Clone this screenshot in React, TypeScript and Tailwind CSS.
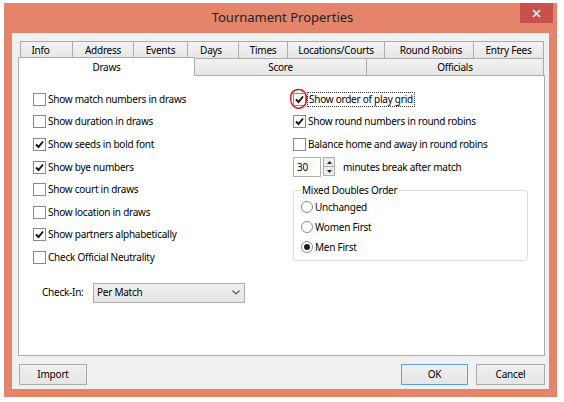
import React from 'react';

const font = { fontFamily: '"Noto Sans", "Open Sans", sans-serif' };

const rowOne = [
    { label: 'Info', w: 'w-[53px] pr-[12px]' },
    { label: 'Address', w: 'w-[62px]' },
    { label: 'Events', w: 'w-[55px]' },
    { label: 'Days', w: 'w-[52px] pr-[4px]' },
    { label: 'Times', w: 'w-[50px]' },
    { label: 'Locations/Courts', w: 'w-[98px]' },
    { label: 'Round Robins', w: 'w-[90px] pl-[4px]' },
    { label: 'Entry Fees', w: 'w-[71px]' },
];

const Check = ({ checked }: { checked?: boolean }) => (
    <span className="w-[13px] h-[13px] shrink-0 border border-[#8a8a8a] bg-white flex items-center justify-center">
        {checked && (
            <svg width="9" height="9" viewBox="0 0 9 9">
                <path d="M1 4.5 L3.5 7 L8 1.5" fill="none" stroke="#111" strokeWidth="1.9" />
            </svg>
        )}
    </span>
);

const Radio = ({ checked }: { checked?: boolean }) => (
    <span className="w-[12px] h-[12px] shrink-0 rounded-full border border-[#8a8a8a] bg-white flex items-center justify-center">
        {checked && <span className="w-[6px] h-[6px] rounded-full bg-[#1a1a1a]" />}
    </span>
);

const CheckRow = ({ label, checked }: { label: string; checked?: boolean }) => (
    <div className="h-[22.6px] flex items-center gap-[2px]">
        <Check checked={checked} />
        <span>{label}</span>
    </div>
);

const Button = ({ children, def, w }: { children: React.ReactNode; def?: boolean; w: string }) => (
    <button
        className={`${w} h-[21px] border ${def ? 'border-[#5aa2e6]' : 'border-[#acacac]'} bg-gradient-to-b from-[#f0f0f0] to-[#e5e5e5] text-[10px] tracking-[-0.2px] text-black`}
    >
        {children}
    </button>
);

export default function App() {
    return (
        <div className="w-[564px] h-[402px] bg-white pt-[3px] pl-[4px] text-[10px] tracking-[-0.25px] text-black" style={font}>
            <div className="w-[553px] h-[394px] bg-[#e4856b] flex flex-col px-[8px] pb-[8px]">
                {/* Title bar */}
                <div className="h-[30px] relative flex items-center justify-center">
                    <span className="text-[13px] tracking-normal text-[#222] -mt-[1px] ml-[4px]">Tournament Properties</span>
                    <div className="absolute -right-[4px] top-0 w-[33px] h-[20px] bg-[#c9514b] flex items-center justify-center">
                        <svg width="9" height="9" viewBox="0 0 9 9">
                            <path d="M1 1 L8 8 M8 1 L1 8" stroke="#fff" strokeWidth="1.6" />
                        </svg>
                    </div>
                </div>

                {/* Client area */}
                <div className="flex-1 bg-[#f0f0f0] flex flex-col pt-[8px] pl-[6px] pr-[4px]">
                    {/* Tabs */}
                    <div className="ml-[2px] mr-[1px]">
                        <div className="flex h-[17px]">
                            {rowOne.map((t, i) => (
                                <div
                                    key={t.label}
                                    className={`${t.w} ${i > 0 ? '-ml-px' : ''} border border-b-0 border-[#acacac] bg-gradient-to-b from-[#f2f2f2] to-[#e6e6e6] flex items-center justify-center leading-none`}
                                >
                                    {t.label}
                                </div>
                            ))}
                        </div>
                        <div className="flex h-[17px] items-end">
                            <div className="relative z-10 w-[177px] h-[19px] -ml-[2px] -mb-px bg-white border border-b-0 border-[#acacac] flex items-start justify-center pt-[2px] leading-[14px]">
                                Draws
                            </div>
                            <div className="w-[173px] h-[17px] -ml-px border border-b-0 border-[#acacac] bg-gradient-to-b from-[#f2f2f2] to-[#e6e6e6] flex items-center justify-center leading-none">
                                Score
                            </div>
                            <div className="w-[178px] h-[17px] -ml-px border border-b-0 border-[#acacac] bg-gradient-to-b from-[#f2f2f2] to-[#e6e6e6] flex items-center justify-center leading-none">
                                Officials
                            </div>
                        </div>
                    </div>

                    {/* Panel */}
                    <div className="h-[281px] bg-white border border-[#acacac] pt-[12px] pl-[14px] flex">
                        <div className="w-[260px] flex flex-col">
                            <CheckRow label="Show match numbers in draws" />
                            <CheckRow label="Show duration in draws" />
                            <CheckRow label="Show seeds in bold font" checked />
                            <CheckRow label="Show bye numbers" checked />
                            <CheckRow label="Show court in draws" />
                            <CheckRow label="Show location in draws" />
                            <CheckRow label="Show partners alphabetically" checked />
                            <CheckRow label="Check Official Neutrality" />
                            <div className="mt-[14px] ml-[9px] flex items-center gap-[6px]">
                                <span className="w-[45px]">Check-In:</span>
                                <div className="w-[152px] h-[20px] border border-[#acacac] bg-gradient-to-b from-[#f0f0f0] to-[#e5e5e5] flex items-center justify-between pl-[3px] pr-[4px]">
                                    <span>Per Match</span>
                                    <svg width="8" height="5" viewBox="0 0 8 5">
                                        <path d="M0.5 0.5 L4 4 L7.5 0.5" fill="none" stroke="#555" strokeWidth="1.2" />
                                    </svg>
                                </div>
                            </div>
                        </div>

                        <div className="flex flex-col">
                            <div className="h-[22.6px] flex items-center gap-[1px] relative">
                                <Check checked />
                                <span className="border border-dotted border-[#333] px-px leading-[13px]">Show order of play grid</span>
                                <svg className="absolute -left-[4px] top-0" width="20" height="22" viewBox="0 0 20 22">
                                    <path d="M14 2.5 C9 0.5 3.5 1.5 2 7 C1 12 2 18 8 20 C13 21 17 18 17.5 12 C18 7 17 4 12.5 2.2" fill="none" stroke="#e01818" strokeWidth="1.5" />
                                </svg>
                            </div>
                            <CheckRow label="Show round numbers in round robins" checked />
                            <CheckRow label="Balance home and away in round robins" />
                            <div className="h-[22.6px] flex items-center">
                                <div className="w-[28px] h-[20px] border border-[#abadb3] bg-white flex items-center pl-[3px]">30</div>
                                <div className="ml-[2px] w-[12px] h-[20px] flex flex-col">
                                    <div className="h-[10px] border border-[#acacac] bg-[#ececec] flex items-center justify-center">
                                        <svg width="5" height="3" viewBox="0 0 5 3"><path d="M0 3 L2.5 0 L5 3 Z" fill="#222" /></svg>
                                    </div>
                                    <div className="h-[10px] -mt-px border border-[#acacac] bg-[#ececec] flex items-center justify-center">
                                        <svg width="5" height="3" viewBox="0 0 5 3"><path d="M0 0 L2.5 3 L5 0 Z" fill="#222" /></svg>
                                    </div>
                                </div>
                                <span className="ml-[8px]">minutes break after match</span>
                            </div>
                            <fieldset className="mt-[5px] w-[235px] border border-[#dcdcdc] rounded-[3px] pl-[7px] pb-[3px]">
                                <legend className="px-px leading-[14px]">Mixed Doubles Order</legend>
                                <div className="h-[20px] flex items-center gap-[2px]">
                                    <Radio />
                                    <span>Unchanged</span>
                                </div>
                                <div className="h-[20px] flex items-center gap-[2px]">
                                    <Radio />
                                    <span>Women First</span>
                                </div>
                                <div className="h-[20px] flex items-center gap-[2px]">
                                    <Radio checked />
                                    <span>Men First</span>
                                </div>
                            </fieldset>
                        </div>
                    </div>

                    {/* Buttons */}
                    <div className="mt-[8px] flex items-center pl-[1px]">
                        <Button w="w-[68px]">Import</Button>
                        <div className="flex-1" />
                        <Button w="w-[67px]" def>OK</Button>
                        <div className="w-[8px]" />
                        <Button w="w-[69px]">Cancel</Button>
                    </div>
                </div>
            </div>
        </div>
    );
}
